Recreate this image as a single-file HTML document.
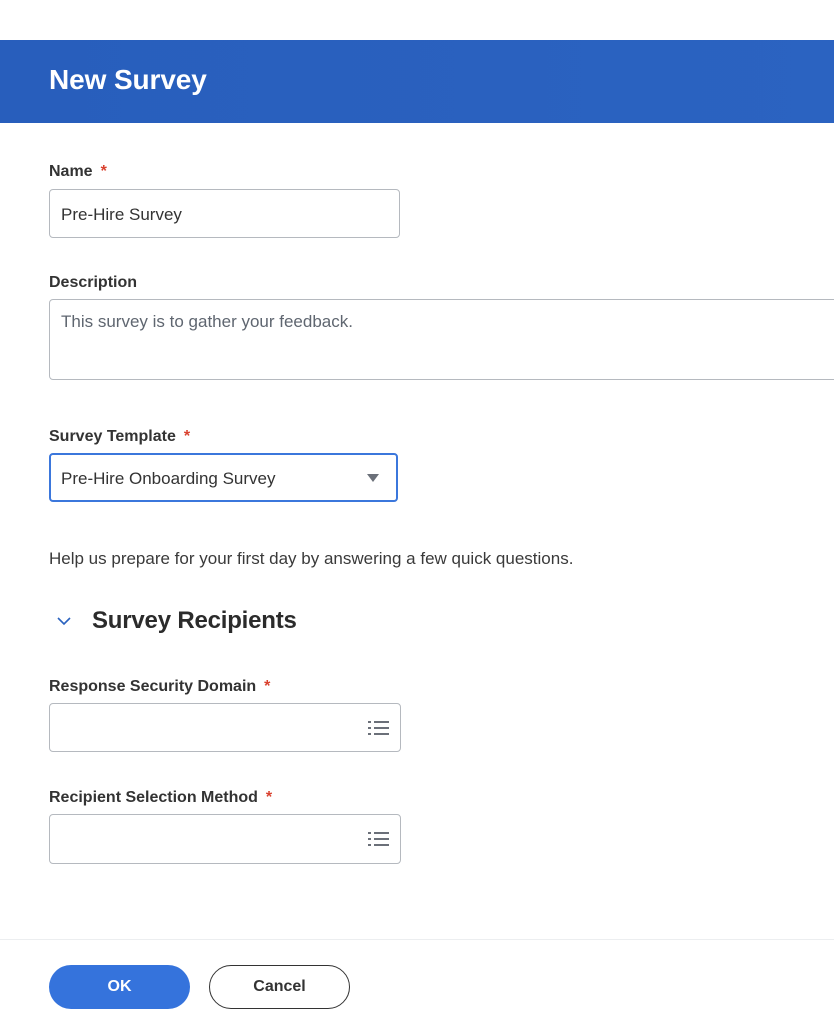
<!DOCTYPE html>
<html><head><meta charset="utf-8"><style>
*{margin:0;padding:0;box-sizing:border-box}
body{width:834px;height:1024px;background:#fff;font-family:"Liberation Sans",Arial,sans-serif;position:relative;overflow:hidden;color:#333}
.hdr{position:absolute;left:0;top:40px;width:834px;height:83px;background:linear-gradient(90deg,#285ebc,#2b63c1);}
.hdr h1{position:absolute;left:49px;top:24px;font-size:28px;color:#fff;font-weight:bold;letter-spacing:-0.1px}
.lbl{position:absolute;left:49px;font-size:16px;font-weight:bold;color:#333}
.lbl span{color:#d9412e;margin-left:8px}
.box{position:absolute;left:49px;border:1px solid #b5b9bf;border-radius:4px;background:#fff;font-size:17px;color:#333}
.txt{position:absolute;left:11px;}
.list{position:absolute;right:10px;top:15px}
.t{position:absolute;font-size:17px;color:#333}
</style></head><body>
<div class="hdr"><h1>New Survey</h1></div>
<div class="lbl" style="top:163px">Name<span>*</span></div>
<div class="box" style="top:189px;width:351px;height:49px"><div class="txt" style="top:15px">Pre-Hire Survey</div></div>
<div class="lbl" style="top:274px">Description</div>
<div class="box" style="top:299px;width:800px;height:81px"><div class="txt" style="top:12px;color:#5f6670">This survey is to gather your feedback.</div></div>
<div class="lbl" style="top:428px">Survey Template<span>*</span></div>
<div class="box" style="top:453px;width:349px;height:49px;border:2px solid #3b77dc"><div class="txt" style="top:14px;left:10px">Pre-Hire Onboarding Survey</div>
<svg style="position:absolute;left:315px;top:18px" width="14" height="10"><path d="M1 1h12l-6 8z" fill="#6b7079"/></svg></div>
<div class="t" style="left:49px;top:549px;color:#3a3a3a">Help us prepare for your first day by answering a few quick questions.</div>
<svg style="position:absolute;left:57px;top:616px" width="14" height="10"><path d="M1 2l6 6 6-6" fill="none" stroke="#2a62bf" stroke-width="1.6"/></svg>
<div class="t" style="left:92px;top:607px;font-size:24px;font-weight:bold;color:#2b2b2b;letter-spacing:-0.2px">Survey Recipients</div>
<div class="lbl" style="top:678px">Response Security Domain<span>*</span></div>
<div class="box" style="top:703px;width:352px;height:49px">
<svg class="list" width="22" height="18"><g fill="#6b7079"><rect x="0" y="2" width="3" height="2"/><rect x="6" y="2" width="15" height="2"/><rect x="0" y="8" width="3" height="2"/><rect x="6" y="8" width="15" height="2"/><rect x="0" y="14" width="3" height="2"/><rect x="6" y="14" width="15" height="2"/></g></svg></div>
<div class="lbl" style="top:789px">Recipient Selection Method<span>*</span></div>
<div class="box" style="top:814px;width:352px;height:50px">
<svg class="list" width="22" height="18"><g fill="#6b7079"><rect x="0" y="2" width="3" height="2"/><rect x="6" y="2" width="15" height="2"/><rect x="0" y="8" width="3" height="2"/><rect x="6" y="8" width="15" height="2"/><rect x="0" y="14" width="3" height="2"/><rect x="6" y="14" width="15" height="2"/></g></svg></div>
<div style="position:absolute;left:0;top:939px;width:834px;height:1px;background:#eceef0"></div>
<div style="position:absolute;left:49px;top:965px;width:141px;height:44px;border-radius:22px;background:#3573dc;color:#fff;font-weight:bold;font-size:16px;text-align:center;line-height:44px">OK</div>
<div style="position:absolute;left:209px;top:965px;width:141px;height:44px;border-radius:22px;border:1.5px solid #333;color:#333;font-weight:bold;font-size:16px;text-align:center;line-height:41px">Cancel</div>
</body></html>
